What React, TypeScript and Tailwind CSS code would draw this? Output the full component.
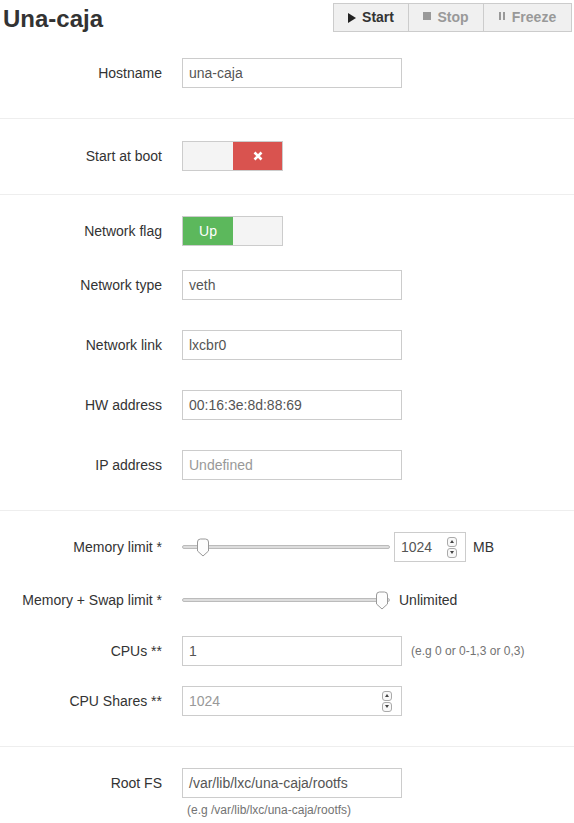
import React from 'react';

function Row({
  label,
  className = '',
  children,
}: {
  label: string;
  className?: string;
  children: React.ReactNode;
}) {
  return (
    <div className={`flex items-center ${className}`}>
      <label className="w-[162px] shrink-0 text-right">{label}</label>
      <div className="ml-[20px] flex items-center">{children}</div>
    </div>
  );
}

function TextInput({ value, placeholder }: { value?: string; placeholder?: string }) {
  return (
    <div className="flex h-[30px] w-[220px] items-center border border-[#ccc] bg-white px-[6px]">
      {value ? (
        <span className="text-[#555]">{value}</span>
      ) : (
        <span className="text-[#999]">{placeholder}</span>
      )}
    </div>
  );
}

function Spinner() {
  return (
    <div className="flex flex-col gap-[1px]">
      <div className="flex h-[10px] w-[10px] items-center justify-center rounded-[3px] border border-[#aaa] bg-[#f8f8f8]">
        <svg width="4" height="3" viewBox="0 0 4 3">
          <path d="M0 3 L2 0 L4 3 Z" fill="#444" />
        </svg>
      </div>
      <div className="flex h-[10px] w-[10px] items-center justify-center rounded-[3px] border border-[#aaa] bg-[#f8f8f8]">
        <svg width="4" height="3" viewBox="0 0 4 3">
          <path d="M0 0 L4 0 L2 3 Z" fill="#444" />
        </svg>
      </div>
    </div>
  );
}

function Slider({ pos }: { pos: number }) {
  return (
    <div className="relative h-[18px] w-[208px]">
      <div className="absolute left-0 right-0 top-[7px] h-[4px] rounded-full border border-[#bbb] bg-[#ddd]" />
      <svg
        className="absolute top-0"
        style={{ left: pos - 7 }}
        width="14"
        height="19"
        viewBox="0 0 14 19"
      >
        <path
          d="M1.5 4 Q1.5 1 4.5 1 L9.5 1 Q12.5 1 12.5 4 L12.5 13 L7 18 L1.5 13 Z"
          fill="#fdfdfd"
          stroke="#999"
          strokeWidth="1"
        />
      </svg>
    </div>
  );
}

function Divider({ className = '' }: { className?: string }) {
  return <div className={`h-px w-full bg-[#eee] ${className}`} />;
}

export default function App() {
  return (
    <div className="w-[574px] font-['Liberation_Sans',Arial,sans-serif] text-[14px] text-[#333]">
      {/* Header */}
      <div className="flex h-[32px] items-start justify-between pl-[3px] pr-[2px] pt-[3px]">
        <h1 className="mt-[3px] text-[24px] font-bold leading-[26px] text-[#333]">Una-caja</h1>
        <div className="flex h-[29px] border border-[#ccc] bg-[#f0f0f0]">
          <button className="flex w-[74px] items-center justify-center gap-[6px] font-bold text-[#333]">
            <svg width="8" height="10" viewBox="0 0 8 10">
              <path d="M0 0 L8 5 L0 10 Z" fill="#222" />
            </svg>
            Start
          </button>
          <button className="flex w-[75px] items-center justify-center gap-[6px] border-l border-[#ccc] font-bold text-[#999]">
            <span className="mb-[3px] h-[8px] w-[8px] bg-[#999]" />
            Stop
          </button>
          <button className="flex w-[88px] items-center justify-center gap-[7px] border-l border-[#ccc] font-bold text-[#999]">
            <span className="mb-[4px] flex gap-[2px]">
              <span className="h-[8px] w-[2px] bg-[#999]" />
              <span className="h-[8px] w-[2px] bg-[#999]" />
            </span>
            Freeze
          </button>
        </div>
      </div>

      <Row label="Hostname" className="mt-[26px]">
        <TextInput value="una-caja" />
      </Row>

      <Divider className="mt-[30px]" />

      <Row label="Start at boot" className="mt-[22px]">
        <div className="flex h-[30px] w-[101px] border border-[#ccc]">
          <div className="w-[50px] bg-[#f4f4f4]" />
          <div className="flex flex-1 items-center justify-center bg-[#d9534f]">
            <svg width="10" height="10" viewBox="0 0 10 10">
              <path d="M1.5 1.5 L8.5 8.5 M8.5 1.5 L1.5 8.5" stroke="#fff" strokeWidth="2.6" />
            </svg>
          </div>
        </div>
      </Row>

      <Divider className="mt-[23px]" />

      <Row label="Network flag" className="mt-[21px]">
        <div className="flex h-[30px] w-[101px] border border-[#ccc]">
          <div className="flex w-[50px] items-center justify-center bg-[#5cb85c] text-white">Up</div>
          <div className="flex-1 bg-[#f4f4f4]" />
        </div>
      </Row>

      <Row label="Network type" className="mt-[24px]">
        <TextInput value="veth" />
      </Row>
      <Row label="Network link" className="mt-[30px]">
        <TextInput value="lxcbr0" />
      </Row>
      <Row label="HW address" className="mt-[30px]">
        <TextInput value="00:16:3e:8d:88:69" />
      </Row>
      <Row label="IP address" className="mt-[30px]">
        <TextInput placeholder="Undefined" />
      </Row>

      <Divider className="mt-[30px]" />

      <Row label="Memory limit *" className="mt-[21px]">
        <Slider pos={21} />
        <div className="ml-[4px] flex h-[30px] w-[72px] items-center justify-between border border-[#ccc] bg-white pl-[6px] pr-[8px]">
          <span className="text-[#555]">1024</span>
          <Spinner />
        </div>
        <span className="ml-[7px]">MB</span>
      </Row>

      <Row label="Memory + Swap limit *" className="mt-[23px] h-[30px]">
        <Slider pos={200} />
        <span className="ml-[9px] text-[#333]">Unlimited</span>
      </Row>

      <Row label="CPUs **" className="mt-[21px]">
        <TextInput value="1" />
        <span className="ml-[9px] text-[12px] text-[#737373]">(e.g 0 or 0-1,3 or 0,3)</span>
      </Row>

      <Row label="CPU Shares **" className="mt-[20px]">
        <div className="flex h-[30px] w-[220px] items-center justify-between border border-[#ccc] bg-white pl-[6px] pr-[9px]">
          <span className="text-[#999]">1024</span>
          <Spinner />
        </div>
      </Row>

      <Divider className="mt-[30px]" />

      <Row label="Root FS" className="mt-[21px]">
        <TextInput value="/var/lib/lxc/una-caja/rootfs" />
      </Row>
      <div className="ml-[187px] mt-[4px] pb-[4px] text-[12px] leading-[17px] text-[#737373]">
        (e.g /var/lib/lxc/una-caja/rootfs)
      </div>
    </div>
  );
}
